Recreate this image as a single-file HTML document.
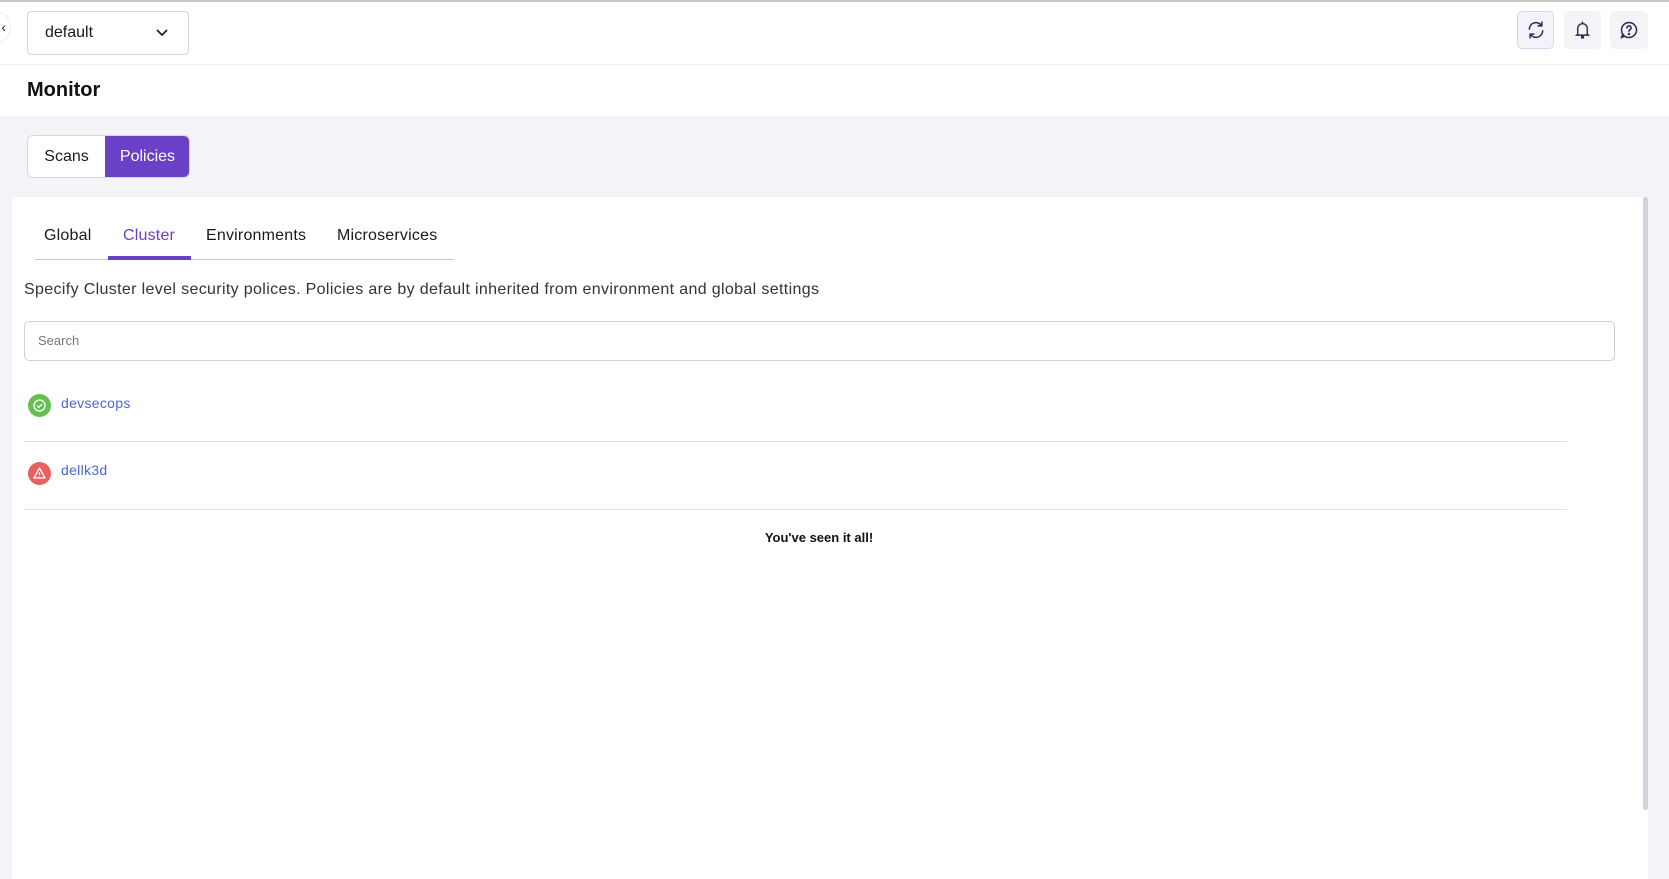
<!DOCTYPE html>
<html><head><style>
*{box-sizing:border-box;margin:0;padding:0}
body{width:1669px;height:879px;overflow:hidden;background:#fff;font-family:"Liberation Sans",sans-serif;color:#1a1a1a;position:relative}
.abs{position:absolute}
</style></head><body>
<div class="abs" style="left:0;top:0;width:1669px;height:2px;background:#c8c8c8"></div>
<div class="abs" style="left:-14px;top:12px;width:25px;height:30px;border-radius:50%;border:1px solid #eee;font-size:14px;line-height:28px;text-align:right;padding-right:4px">‹</div>
<div class="abs" style="left:27px;top:11px;width:162px;height:44px;border:1px solid #d6d6d6;border-radius:4px;font-size:16px;line-height:42px;padding-left:17px">default
<svg class="abs" style="left:127px;top:15px" width="14" height="12" viewBox="0 0 14 12"><path d="M2 3l5 5 5-5" fill="none" stroke="#222" stroke-width="1.8"/></svg></div>
<div class="abs" style="left:1517px;top:11px;width:37px;height:38px;border:1px solid #d9d4f0;border-radius:5px;background:#f4f3fa">
<svg style="margin:8px" width="20" height="20" viewBox="0 0 24 24" fill="none" stroke="#2d2b55" stroke-width="1.8" stroke-linecap="round"><path d="M4 11a8 8 0 0 1 14.5-4.5M20 13a8 8 0 0 1-14.5 4.5"/><path d="M19 2.5v4.5h-4.5M5 21.5V17h4.5"/></svg></div>
<div class="abs" style="left:1564px;top:11px;width:37px;height:38px;border-radius:5px;background:#f4f4f7">
<svg style="margin:9px" width="19" height="20" viewBox="0 0 24 24" fill="none" stroke="#2d2b55" stroke-width="1.8" stroke-linecap="round"><path d="M6 17V10a6 6 0 0 1 12 0v7l1.5 1.5h-15z M12 2v2"/><circle cx="12" cy="21" r="1.2" fill="#2d2b55"/></svg></div>
<div class="abs" style="left:1610px;top:11px;width:38px;height:38px;border-radius:5px;background:#f4f4f7">
<svg style="margin:9px" width="20" height="20" viewBox="0 0 24 24" fill="none" stroke="#2d2b55" stroke-width="1.8" stroke-linecap="round"><path d="M12 3a9 9 0 1 1-7.5 14L3 21l4-1.5A9 9 0 0 1 12 3z"/><path d="M9.5 9.5a2.5 2.5 0 1 1 3.5 2.3c-.7.4-1 .9-1 1.7"/><circle cx="12" cy="16.8" r=".6" fill="#2d2b55"/></svg></div>
<div class="abs" style="left:0;top:64px;width:1669px;height:1px;background:#eeeeee"></div>
<div class="abs" style="left:27px;top:79px;font-size:20px;font-weight:bold;color:#111">Monitor</div>
<div class="abs" style="left:0;top:116px;width:1669px;height:763px;background:#f4f4f8"></div>
<div class="abs" style="left:27px;top:135px;width:163px;height:43px;border:1px solid #d6d6d6;border-radius:6px;background:#fff;overflow:hidden;font-size:16px">
<div class="abs" style="left:0;top:0;width:77px;height:41px;line-height:41px;text-align:center">Scans</div>
<div class="abs" style="left:77px;top:0;width:85px;height:41px;line-height:41px;text-align:center;background:#6a41c6;color:#fff">Policies</div></div>
<div class="abs" style="left:12px;top:197px;width:1636px;height:682px;background:#fff"></div>
<div class="abs" style="left:1643px;top:197px;width:5px;height:613px;background:#d3d5dd;border-radius:2px"></div>
<div class="abs" style="left:35px;top:259px;width:419px;height:1px;background:#c8c8cc"></div>
<div class="abs" style="left:108px;top:256px;width:83px;height:4px;background:#6a41c6"></div>
<div class="abs" style="left:44px;top:227px;font-size:16px;letter-spacing:.2px">Global</div>
<div class="abs" style="left:123px;top:227px;font-size:16px;color:#6a41c6;letter-spacing:.2px">Cluster</div>
<div class="abs" style="left:206px;top:227px;font-size:16px;letter-spacing:.2px">Environments</div>
<div class="abs" style="left:337px;top:227px;font-size:16px;letter-spacing:.2px">Microservices</div>
<div class="abs" style="left:24px;top:281px;font-size:16px;letter-spacing:.35px;color:#333">Specify Cluster level security polices. Policies are by default inherited from environment and global settings</div>
<div class="abs" style="left:24px;top:321px;width:1591px;height:40px;border:1px solid #d0d0d0;border-radius:5px;font-size:13px;line-height:38px;padding-left:13px;color:#777">Search</div>
<div class="abs" style="left:28px;top:394px;width:23px;height:23px;border-radius:50%;background:#65c14f">
<svg width="23" height="23" viewBox="0 0 23 23" fill="none" stroke="#fff" stroke-width="1.3"><circle cx="11.5" cy="11.5" r="5.5"/><path d="M9 11.6l1.8 1.8 3.3-3.3"/></svg></div>
<div class="abs" style="left:61px;top:395px;font-size:14px;color:#4a66d6;letter-spacing:.3px">devsecops</div>
<div class="abs" style="left:24px;top:441px;width:1543px;height:1px;background:#e2e2e2"></div>
<div class="abs" style="left:28px;top:462px;width:23px;height:23px;border-radius:50%;background:#e86060">
<svg width="23" height="23" viewBox="0 0 23 23" fill="none" stroke="#fff" stroke-width="1.3" stroke-linejoin="round"><path d="M11.5 6l5.5 10h-11z"/><path d="M11.5 10v3M11.5 14.3v.4"/></svg></div>
<div class="abs" style="left:61px;top:462px;font-size:14px;color:#4a66d6;letter-spacing:.3px">dellk3d</div>
<div class="abs" style="left:24px;top:509px;width:1543px;height:1px;background:#e2e2e2"></div>
<div class="abs" style="left:0;top:530px;width:1638px;text-align:center;font-size:13px;font-weight:bold;color:#111">You've seen it all!</div>
</body></html>
